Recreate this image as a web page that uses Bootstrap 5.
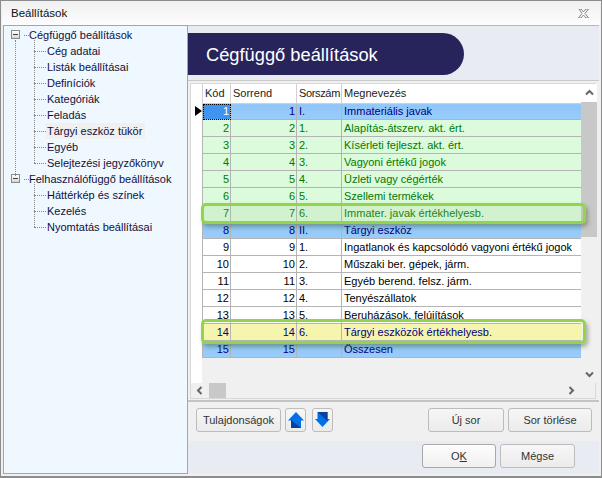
<!DOCTYPE html>
<html lang="en">
<head>
  <meta charset="UTF-8" />
  <title>Beállítások</title>
  <link href="https://cdn.jsdelivr.net/npm/bootstrap@5.3.0/dist/css/bootstrap.min.css" rel="stylesheet"/>
  <style>
    html, body { height: 100%; }
    body { background: #f0f0f0; font: 11px/16px "Liberation Sans", Arial, sans-serif; color: #000; overflow: hidden; }
    .dlg { width: 602px; height: 478px; border: 1px solid #8c8c8c; border-bottom-width: 2px; padding: 0 1px; background: #f0f0f0; }
    .dlg-title { height: 24px; padding-left: 9px; font-size: 11.5px; background: linear-gradient(#f0f0f0, #fdfdfd); color: #111; }
    .dlg-close { width: 11px; height: 9px; margin-right: 11px; }
    .dlg-body { height: 449px; }

    .tree-pane { width: 185px; margin-left: 1px; background: #f0f8ff; border: 1px solid #a6a6a6; padding-top: 1px; color: #10103c; }
    .tree-list, .tree-sub { list-style: none; margin: 0; padding: 0; }
    .tree-list { margin-left: 6px; }
    .tree-root { position: relative; padding-left: 19px; height: 16px; white-space: nowrap; }
    .tree-root::after { content: ""; position: absolute; left: 14px; top: 8px; width: 5px; border-top: 1px dotted #888; }
    .tree-box { position: absolute; left: 1px; top: 3px; width: 9px; height: 9px; border: 1px solid #8a8a8a; background: linear-gradient(#fff, #d6d6d6); }
    .tree-box::after { content: ""; position: absolute; left: 1px; right: 1px; top: 3px; border-top: 1px solid #444; }
    .tree-sub { margin-left: 0; position: relative; }
    .tree-sub li { position: relative; padding-left: 37px; height: 16px; white-space: nowrap; }
    .tree-sub li::before { content: ""; position: absolute; left: 24px; top: 8px; width: 12px; border-top: 1px dotted #888; }
    .tree-sub::before { content: ""; position: absolute; left: 24px; top: -5px; bottom: 8px; border-left: 1px dotted #888; }
    .tree-trunk { position: absolute; left: 5px; top: 13px; height: 136px; border-left: 1px dotted #888; }
    .tree-sel { display: inline-block; background: #f0f0f0; padding: 0 3px 0 1px; margin-left: -1px; }

    .main-pane { width: 411px; }
    .head-band { height: 56px; background: #e8ebf1; border-top: 1px solid #b8b8b8; border-bottom: 1px solid #c8c8c8; padding-top: 7px; }
    .head-pill { width: 276px; height: 42px; background: #27245c; color: #fff; font-size: 18.3px; line-height: 43px; padding-left: 18px; border-radius: 0 24px 24px 0; }

    .grid-box { position: relative; height: 316px; margin: 2px 3px 0 2px; background: #fff; border: 1px solid #d8d8d8; }
    .grid-top { height: 299px; }
    .grid-left { width: 11px; flex: none; background: #fff; height: 274px; position: relative; }
    .row-arrow { position: absolute; left: 4px; top: 22px; width: 0; height: 0; border-left: 7px solid #000; border-top: 5px solid transparent; border-bottom: 5px solid transparent; }
    .grid-mid { width: 379px; background: #f0f0f0; }
    .data-grid { table-layout: fixed; width: 379px; border-collapse: collapse; background: #fff; }
    .data-grid th, .data-grid td { height: 17px; padding: 0 1px; line-height: 15px; font-weight: 400; border: 1px solid #b4b4b4; border-top: 0; white-space: nowrap; overflow: hidden; }
    .data-grid th { background: #fff; height: 20px; color: #222; border-color: #d0d0d0; padding-left: 2px; }
    .data-grid th:nth-child(3) { letter-spacing: -.35px; }
    .data-grid tbody tr:first-child td { height: 16px; }
    .data-grid td:nth-child(3), .data-grid td:nth-child(4) { padding-left: 2px; }
    .data-grid td.num { text-align: right; padding-right: 1px; }
    .row-blue td { background: linear-gradient(#8fc6f8, #99ccfa); color: #000080; }
    .row-green td { background: #dcfbdc; color: #007a00; }
    .row-plain td { background: #fff; color: #000; }
    .row-yellow td { background: #f6f5ae; color: #000080; }
    .row-sel-cell { background: #3d95f0 !important; color: #fff !important; outline: 1px dotted #000; outline-offset: -1px; }
    .vscroll { width: 16px; flex: none; background: #f0f0f0; position: relative; }
    .vscroll-btn { height: 18px; background: #fff; }
    .vscroll-thumb { height: 135px; background: #c8c8c8; }
    .vscroll-down { position: absolute; left: 0; right: 0; bottom: 0; height: 17px; }
    .hscroll { height: 15px; background: #f0f0f0; }
    .hscroll-thumb { width: 17px; height: 15px; background: #c8c8c8; margin-left: 2px; }
    .sb-btn { width: 16px; height: 15px; flex: none; }
    .glow { position: absolute; left: 10px; width: 385px; border: 3px solid #92d54a; border-radius: 5px; box-shadow: 2px 3px 4px rgba(70,90,50,.45); pointer-events: none; }
    .glow-a { top: 119px; height: 21px; background: rgba(160,190,140,.16); }
    .glow-b { top: 235px; height: 25px; }

    .tool-row { height: 42px; border-top: 2px solid #c4c4c4; margin-top: 1px; padding: 6px 7px 0 8px; }
    .win-btn { height: 24px; padding: 0; font-size: 11px; line-height: 22px; color: #333; background: linear-gradient(#f6f6f6, #ebebeb); border: 1px solid #bcbcbc; border-radius: 3px; }
    .btn-props { width: 85px; }
    .btn-arrow { width: 21px; margin-left: 4px; display: flex; align-items: center; justify-content: center; }
    .btn-arrow + .btn-arrow { margin-left: 6px; }
    .btn-new { width: 76px; margin-right: 4px; }
    .btn-del { width: 84px; }
    .foot-row { height: 33px; background: #e8ebf1; padding: 3px 24px 0 0; }
    .btn-ok { width: 74px; margin-right: 4px; background: linear-gradient(#fdfdfd, #f0f0f0); border-color: #a8a8a8; }
    .btn-cancel { width: 75px; }
  </style>
</head>
<body>

  <div class="dlg d-flex flex-column">
    <div class="dlg-title d-flex align-items-center justify-content-between">
      <span>Beállítások</span>
      <svg class="dlg-close" viewBox="0 0 11 9"><path d="M1 0h2l2.500 3L8 0h2.500L7 4.500 10.500 9H8L5.500 6 3 9H.5L4 4.500z" fill="#fff" stroke="#777" stroke-width=".9"/></svg>
    </div>

    <div class="dlg-body d-flex">
      <aside class="tree-pane">
        <ul class="tree-list position-relative">
          <li><div class="tree-root"><span class="tree-box"></span>Cégfüggő beállítások</div>
            <ul class="tree-sub">
              <li>Cég adatai</li>
              <li>Listák beállításai</li>
              <li>Definíciók</li>
              <li>Kategóriák</li>
              <li>Feladás</li>
              <li><span class="tree-sel">Tárgyi eszköz tükör</span></li>
              <li>Egyéb</li>
              <li>Selejtezési jegyzőkönyv</li>
            </ul>
          </li>
          <li><div class="tree-root"><span class="tree-box"></span>Felhasználófüggő beállítások</div>
            <ul class="tree-sub">
              <li>Háttérkép és színek</li>
              <li>Kezelés</li>
              <li>Nyomtatás beállításai</li>
            </ul>
          </li>
          <li class="tree-trunk"></li>
        </ul>
      </aside>

      <main class="main-pane d-flex flex-column">
        <div class="head-band">
          <div class="head-pill">Cégfüggő beállítások</div>
        </div>

        <div class="grid-box">
          <div class="grid-top d-flex">
            <div class="grid-left"><span class="row-arrow"></span></div>
            <div class="grid-mid">
              <table class="data-grid">
                <colgroup><col style="width:28px"><col style="width:66px"><col style="width:45px"><col style="width:240px"></colgroup>
                <thead><tr><th>Kód</th><th>Sorrend</th><th>Sorszám</th><th>Megnevezés</th></tr></thead>
                <tbody>
                  <tr class="row-blue"><td class="num row-sel-cell">1</td><td class="num">1</td><td>I.</td><td>Immateriális javak</td></tr>
                  <tr class="row-green"><td class="num">2</td><td class="num">2</td><td>1.</td><td>Alapítás-átszerv. akt. ért.</td></tr>
                  <tr class="row-green"><td class="num">3</td><td class="num">3</td><td>2.</td><td>Kísérleti fejleszt. akt. ért.</td></tr>
                  <tr class="row-green"><td class="num">4</td><td class="num">4</td><td>3.</td><td>Vagyoni értékű jogok</td></tr>
                  <tr class="row-green"><td class="num">5</td><td class="num">5</td><td>4.</td><td>Üzleti vagy cégérték</td></tr>
                  <tr class="row-green"><td class="num">6</td><td class="num">6</td><td>5.</td><td>Szellemi termékek</td></tr>
                  <tr class="row-green"><td class="num">7</td><td class="num">7</td><td>6.</td><td>Immater. javak értékhelyesb.</td></tr>
                  <tr class="row-blue"><td class="num">8</td><td class="num">8</td><td>II.</td><td>Tárgyi eszköz</td></tr>
                  <tr class="row-plain"><td class="num">9</td><td class="num">9</td><td>1.</td><td>Ingatlanok és kapcsolódó vagyoni értékű jogok</td></tr>
                  <tr class="row-plain"><td class="num">10</td><td class="num">10</td><td>2.</td><td>Műszaki ber. gépek, járm.</td></tr>
                  <tr class="row-plain"><td class="num">11</td><td class="num">11</td><td>3.</td><td>Egyéb berend. felsz. járm.</td></tr>
                  <tr class="row-plain"><td class="num">12</td><td class="num">12</td><td>4.</td><td>Tenyészállatok</td></tr>
                  <tr class="row-plain"><td class="num">13</td><td class="num">13</td><td>5.</td><td>Beruházások, felújítások</td></tr>
                  <tr class="row-yellow"><td class="num">14</td><td class="num">14</td><td>6.</td><td>Tárgyi eszközök értékhelyesb.</td></tr>
                  <tr class="row-blue"><td class="num">15</td><td class="num">15</td><td></td><td>Összesen</td></tr>
                </tbody>
              </table>
            </div>
            <div class="vscroll">
              <div class="vscroll-btn d-flex align-items-center justify-content-center">
                <svg width="9" height="7" viewBox="0 0 9 7"><path d="M1 5.500 4.500 2 8 5.500" fill="none" stroke="#666" stroke-width="2"/></svg>
              </div>
              <div class="vscroll-thumb"></div>
              <div class="vscroll-down d-flex align-items-center justify-content-center">
                <svg width="9" height="7" viewBox="0 0 9 7"><path d="M1 1.500 4.500 5 8 1.500" fill="none" stroke="#666" stroke-width="2"/></svg>
              </div>
            </div>
          </div>
          <div class="hscroll d-flex align-items-center">
            <span class="sb-btn d-flex align-items-center justify-content-center">
              <svg width="7" height="9" viewBox="0 0 7 9"><path d="M5.500 1 2 4.500 5.500 8" fill="none" stroke="#666" stroke-width="2"/></svg>
            </span>
            <div class="hscroll-thumb"></div>
            <span class="sb-btn ms-auto me-3 d-flex align-items-center justify-content-center">
              <svg width="7" height="9" viewBox="0 0 7 9"><path d="M1.500 1 5 4.500 1.500 8" fill="none" stroke="#666" stroke-width="2"/></svg>
            </span>
          </div>
          <div class="glow glow-a"></div>
          <div class="glow glow-b"></div>
        </div>

        <div class="tool-row d-flex">
          <button type="button" class="win-btn btn-props">Tulajdonságok</button>
          <button type="button" class="win-btn btn-arrow">
            <svg width="16" height="16" viewBox="0 0 16 16"><path d="M8 0 16 8.500H13V16H3V8.500H0z" fill="#0070e8"/><path d="M3 8 13 16H3z" fill="#0a3f9a"/></svg>
          </button>
          <button type="button" class="win-btn btn-arrow">
            <svg width="15" height="15" viewBox="0 0 15 15"><path d="M2.500 0H12.500V7H15L7.500 15 0 7H2.500z" fill="#0070e8"/><path d="M2.500 0H12.500V9z" fill="#0a3f9a"/></svg>
          </button>
          <button type="button" class="win-btn btn-new ms-auto">Új sor</button>
          <button type="button" class="win-btn btn-del">Sor törlése</button>
        </div>

        <div class="foot-row d-flex justify-content-end">
          <button type="button" class="win-btn btn-ok">O<u>K</u></button>
          <button type="button" class="win-btn btn-cancel">Mégse</button>
        </div>
      </main>
    </div>
  </div>

  <script src="https://cdn.jsdelivr.net/npm/bootstrap@5.3.0/dist/js/bootstrap.bundle.min.js"></script>
</body>
</html>
